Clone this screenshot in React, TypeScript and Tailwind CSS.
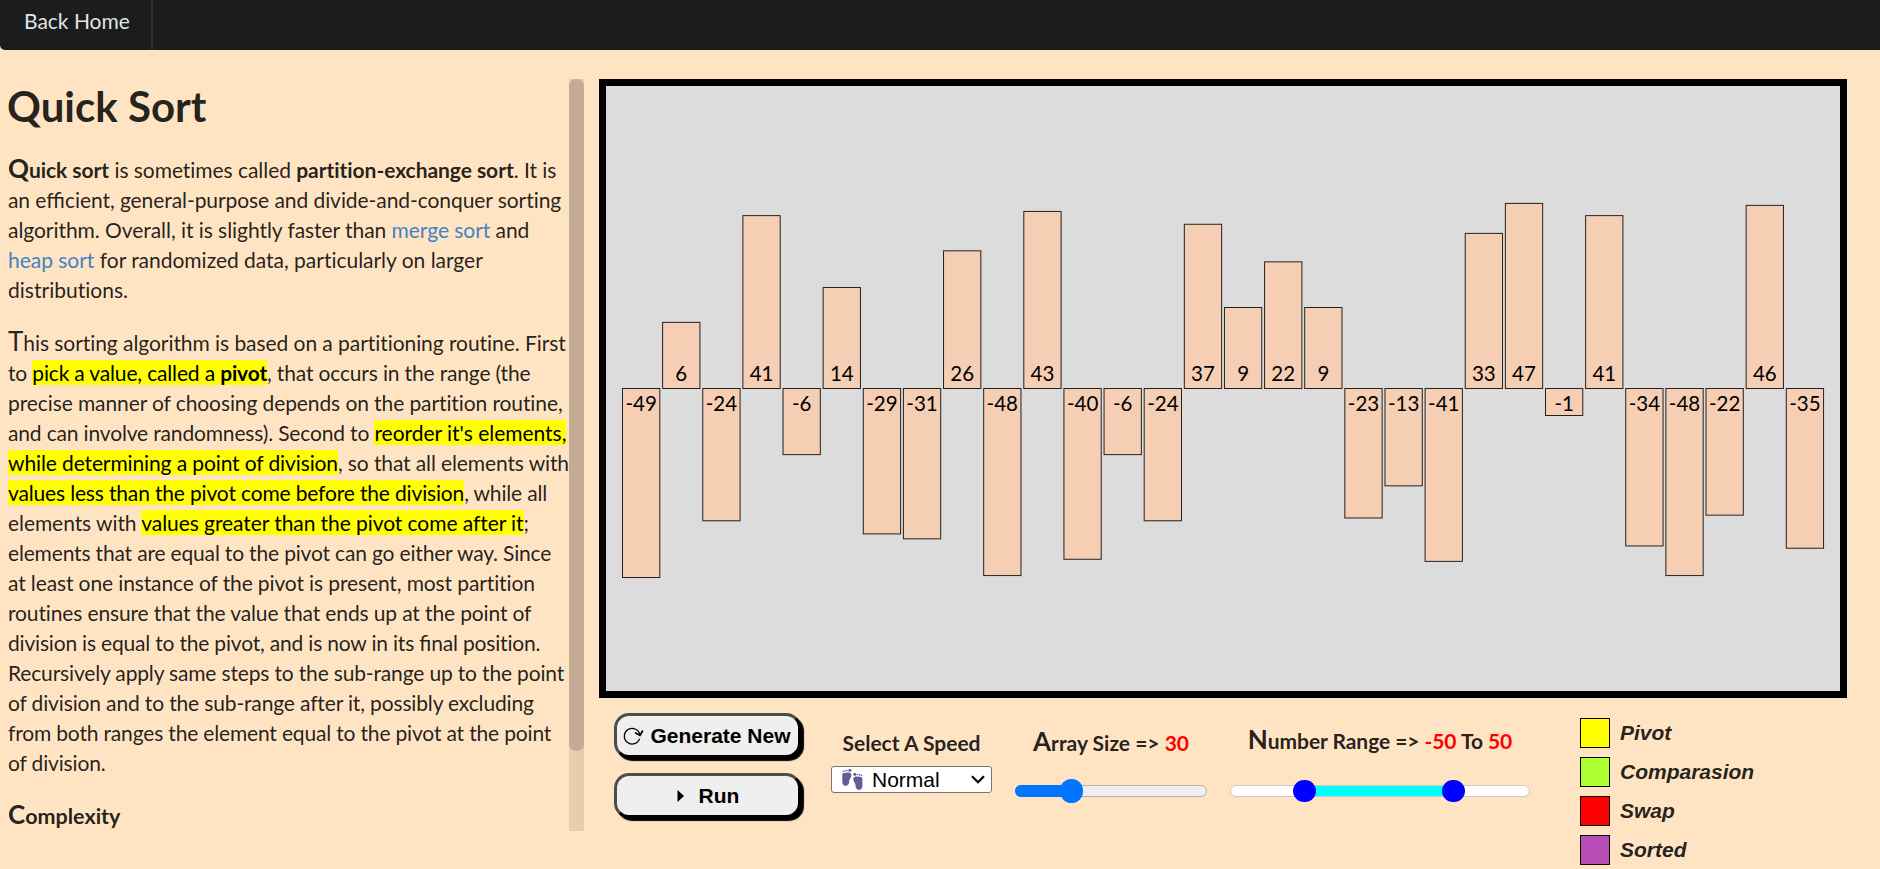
import React from "react";

const VALUES = [
  -49, 6, -24, 41, -6, 14, -29, -31, 26, -48, 43, -40, -6, -24, 37, 9, 22, 9,
  -23, -13, -41, 33, 47, -1, 41, -34, -48, -22, 46, -35,
];

const BASE = 302.5;
const PITCH = 40.13;
const BAR_W = 37.3;

function Chart() {
  return (
    <svg viewBox="0 0 1234 605" className="block h-[605px] w-[1234px]">
      {VALUES.map((v, i) => {
        const h = 27 * Math.sqrt(Math.abs(v));
        const x = 16.5 + i * PITCH;
        return (
          <g key={i}>
            <rect
              x={x}
              y={v > 0 ? BASE - h : BASE}
              width={BAR_W}
              height={h}
              fill="#f5ceb4"
              stroke="#222"
              strokeWidth="1"
            />
            <text x={x + BAR_W / 2} y={v > 0 ? 295 : 325} textAnchor="middle" fontSize="20.5" fill="#000">
              {v}
            </text>
          </g>
        );
      })}
    </svg>
  );
}

function Mark({ children }: { children: React.ReactNode }) {
  return <mark className="bg-[#ffff00] text-black">{children}</mark>;
}

function Cap({ children }: { children: React.ReactNode }) {
  return <span className="text-[26px] leading-[0]">{children}</span>;
}

function Lig({ children }: { children: React.ReactNode }) {
  return <span className="tracking-normal [font-variant-ligatures:normal]">{children}</span>;
}

function Article() {
  return (
    <div className="flex h-[752px] w-[584px] shrink-0 overflow-hidden">
      <article className="w-[569px] pl-2 text-[21px] leading-[30px] whitespace-nowrap [font-variant-ligatures:none]">
        <h1 className="-ml-px mb-[22px] text-[42px] leading-[54px] font-bold">Quick Sort</h1>
        <p className="mb-[23px] tracking-[-0.05px]">
          <b><Cap>Q</Cap>uick sort</b> is sometimes called <b>partition-exchange sort</b>. It is<br />
          <span className="tracking-[-0.07px]">an e<Lig>ffi</Lig>cient, general-purpose and divide-and-conquer sorting</span><br />
          algorithm. Overall, it is slightly faster than <a className="text-[#4183c4]">merge sort</a> and<br />
          <span className="tracking-[-0.02px]"><a className="text-[#4183c4]">heap sort</a> for randomized data, particularly on larger</span><br />
          <span className="tracking-[0.02px]">distributions.</span>
        </p>
        <p className="mb-[23px] tracking-[-0.16px]">
          <span className="tracking-[-0.06px]"><Cap>T</Cap>his sorting algorithm is based on a partitioning routine. First</span><br />
          to <Mark>pick a value, called a <b>pivot</b></Mark>, that occurs in the range (the<br />
          <span className="tracking-[-0.1px]">precise manner of choosing depends on the partition routine,</span><br />
          and can involve randomness). Second to <span className="tracking-[-0.02px]"><Mark>reorder it's elements,</Mark></span><br />
          <span className="tracking-[-0.115px]"><Mark>while determining a point of division</Mark>, so that all elements with</span><br />
          <Mark>values less than the pivot come before the division</Mark>, while all<br />
          <span className="tracking-[-0.07px]">elements with <Mark>values greater than the pivot come after it</Mark>;</span><br />
          <span className="tracking-[-0.17px]">elements that are equal to the pivot can go either way. Since</span><br />
          <span className="tracking-[-0.12px]">at least one instance of the pivot is present, most partition</span><br />
          <span className="tracking-[-0.135px]">routines ensure that the value that ends up at the point of</span><br />
          <span className="tracking-[-0.19px]">division is equal to the pivot, and is now in its <Lig>fi</Lig>nal position.</span><br />
          Recursively apply same steps to the sub-range up to the point<br />
          <span className="tracking-[-0.145px]">of division and to the sub-range after it, possibly excluding</span><br />
          <span className="tracking-[-0.17px]">from both ranges the element equal to the pivot at the point</span><br />
          of division.
        </p>
        <p className="text-[21.5px]"><b><Cap>C</Cap>omplexity</b></p>
      </article>
      <div className="w-[15px] bg-[#e5cdb0]">
        <div className="h-[672px] rounded-[7px] bg-[#c2ad94]" />
      </div>
    </div>
  );
}

const BUTTON =
  "flex h-[45px] w-[187px] items-center justify-center rounded-[15px] border-[3px] border-t-[#4c4c4c] border-r-black border-b-black border-l-[#4c4c4c] bg-[#efefef] font-['Liberation_Sans',sans-serif] text-[21px] font-bold text-black shadow-[3px_3px_1px_#000]";

function Foot() {
  return (
    <>
      <path d="M.3 5.500C.3 4 3 3.600 6 3.500S9.700 4.600 9.300 7S7.200 10 7.200 12S6.600 16.800 3.600 16.800S.3 14 .3 11Z" />
      <circle cx="1" cy="2.500" r=".7" />
      <circle cx="2.900" cy="1.900" r=".8" />
      <circle cx="4.900" cy="1.500" r=".8" />
      <ellipse cx="7.900" cy="1.400" rx="1.600" ry="1.300" />
    </>
  );
}

function Controls() {
  return (
    <div className="flex">
      <div className="ml-[15px] flex flex-col gap-[15px] pt-[15px]">
        <button className={BUTTON}>
          <svg width="20" height="20" viewBox="0 0 20 20" className="mr-[6px] overflow-visible" fill="none" stroke="#000" strokeWidth="1.3">
            <path d="M15.600 12.600A7.800 7.800 0 1 1 15.900 9.200" />
            <path d="M11 6.700L16 9.400L18.800 4.500" strokeWidth="1.8" />
          </svg>
          Generate New
        </button>
        <button className={BUTTON}>
          <svg width="8" height="12" viewBox="0 0 8 12" className="mr-[13px]">
            <path d="M0.5 0L7 6L0.5 12Z" />
          </svg>
          <span className="relative left-[1px]">Run</span>
        </button>
      </div>

      <div className="ml-[30px] flex w-[161px] flex-col items-center pt-[30px] text-[21px] leading-[30px]">
        <b>Select A Speed</b>
        <div className="mt-[8px] flex h-[27px] w-full items-center rounded-[3px] border border-[#767676] bg-white pl-[10px] font-['Liberation_Sans',sans-serif] text-black">
          <svg width="21" height="21" viewBox="0 0 21 21" className="mr-[9px]" fill="#675a97">
            <Foot />
            <g transform="translate(20.7 4) scale(-1 1)">
              <Foot />
            </g>
          </svg>
          <span>Normal</span>
          <svg width="14" height="9" viewBox="0 0 14 9" className="mr-[6px] ml-auto" fill="none" stroke="#000" strokeWidth="2.2">
            <path d="M1 1.200L7 7.200L13 1.200" />
          </svg>
        </div>
      </div>

      <div className="ml-[23px] flex w-[192px] flex-col items-center pt-[30px] text-[21px] leading-[30px]">
        <b><Cap>A</Cap>rray Size =&gt; <span className="text-[#ff0000]">30</span></b>
        <div className="mt-[21px] flex h-[24px] w-full items-center">
          <div className="relative h-3 w-full rounded-full border border-[#b2b2b2] bg-[#efefef]">
            <div className="absolute -top-px -left-px h-3 w-[56px] rounded-l-full bg-[#0075ff]" />
            <div className="absolute -top-[7px] left-[44px] h-[24px] w-[23px] rounded-full bg-[#0075ff]" />
          </div>
        </div>
      </div>

      <div className="ml-[23px] flex w-[300px] flex-col items-center pt-[28px] text-[21px] leading-[30px]">
        <b className="tracking-[-0.06px]">
          <Cap>N</Cap>umber Range =&gt; <span className="text-[#ff0000]">-50</span> To <span className="text-[#ff0000]">50</span>
        </b>
        <div className="mt-[23px] flex h-[24px] w-full items-center">
          <div className="relative h-3 w-full rounded-full border border-[#c8c8c8] bg-white">
            <div className="absolute top-0 left-[74px] h-[10px] w-[150px] bg-[#00ffff]" />
            <div className="absolute -top-[6px] left-[62px] h-[22px] w-[23px] rounded-full bg-[#0000ff]" />
            <div className="absolute -top-[6px] left-[211px] h-[22px] w-[23px] rounded-full bg-[#0000ff]" />
          </div>
        </div>
      </div>

      <div className="ml-[50px] flex flex-col gap-[9px] pt-[20px]">
        {[
          ["Pivot", "bg-[#ffff00]"],
          ["Comparasion", "bg-[#adff2f]"],
          ["Swap", "bg-[#ff0000]"],
          ["Sorted", "bg-[#b64cb6]"],
        ].map(([name, color]) => (
          <div key={name} className="flex h-[30px] gap-[10px]">
            <span className={"h-[30px] w-[30px] border border-black " + color} />
            <span className="font-['Liberation_Sans',sans-serif] text-[21px] leading-[29px] font-bold italic">{name}</span>
          </div>
        ))}
      </div>
    </div>
  );
}

export default function App() {
  return (
    <div className="h-[869px] w-[1880px] overflow-hidden bg-[#ffe4c4] font-[Lato,sans-serif] text-[#000000de]">
      <nav className="flex h-[50px] rounded-bl-[5px] bg-[#1b1c1d]">
        <a className="h-full w-[153px] border-r-2 border-[#2d2e2f] pl-6 text-[21px] leading-[42px] text-[#ffffffe6]">Back Home</a>
      </nav>
      <div className="flex pt-[29px]">
        <Article />
        <main className="ml-[15px] w-[1248px]">
          <div className="h-[619px] w-[1248px] border-[7px] border-black bg-[#dcdcdc]">
            <Chart />
          </div>
          <Controls />
        </main>
      </div>
    </div>
  );
}
